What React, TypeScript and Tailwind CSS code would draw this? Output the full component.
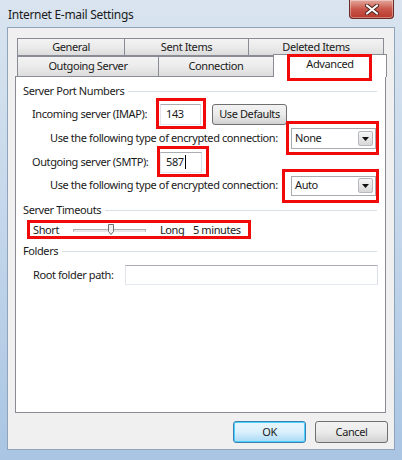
import React from "react";

function Mark({ className }: { className: string }) {
  return (
    <div
      className={`pointer-events-none absolute z-20 border-[3px] border-[#f00a0a] ${className}`}
    />
  );
}

function GroupHeader({ title }: { title: string }) {
  return (
    <div className="flex h-[16px] items-center pl-[7px] pr-[8px]">
      <span>{title}</span>
      <div className="ml-[4px] h-px flex-1 bg-[#d5dfe5]" />
    </div>
  );
}

function Combo({ value, tall }: { value: string; tall?: boolean }) {
  return (
    <div
      className={`flex w-[85px] items-center border border-[#a7abb0] bg-white pl-[3px] pr-[2px] ${
        tall ? "h-[21px]" : "h-[20px]"
      }`}
    >
      <span>{value}</span>
      <div className="ml-auto flex h-[15px] w-[15px] items-center justify-center rounded-[2px] border border-[#b5b9be] bg-gradient-to-b from-[#f6f6f6] to-[#d8d8d8]">
        <svg width="7" height="4" viewBox="0 0 7 4">
          <path d="M0 0h7L3.5 4z" fill="#111" />
        </svg>
      </div>
    </div>
  );
}

function Tab({
  label,
  className,
}: {
  label: string;
  className: string;
}) {
  return (
    <div
      className={`flex items-center justify-center border border-[#898c95] bg-gradient-to-b from-[#f3f3f3] via-[#ebebeb] to-[#dcdcdc] ${className}`}
    >
      {label}
    </div>
  );
}

export default function App() {
  return (
    <div className="relative h-[460px] w-[402px] overflow-hidden whitespace-nowrap bg-gradient-to-b from-[#d9e4ef] via-[#c3d6ea] to-[#a9c5e3] font-['Noto_Sans',sans-serif] text-[11px] tracking-[-0.4px] text-[#1a1a1a]">
      {/* title bar */}
      <div className="flex h-[27px] items-start justify-between pl-[8px] pr-[8px]">
        <span className="mt-[6px] text-[12px] tracking-[-0.3px] text-[#1b1b1b]">
          Internet E-mail Settings
        </span>
        <div className="flex h-[19px] w-[45px] items-center justify-center rounded-b-[4px] border border-t-0 border-[#6b2b25] bg-gradient-to-b from-[#e3a89e] via-[#c9574a] to-[#b8392c] shadow-[inset_0_0_0_1px_rgba(255,255,255,0.35)]">
          <svg width="14" height="11" viewBox="0 0 14 11">
            <path
              d="M2 1.5l10 8M12 1.5l-10 8"
              stroke="#4a2520"
              strokeWidth="4"
              strokeLinecap="round"
            />
            <path
              d="M2 1.5l10 8M12 1.5l-10 8"
              stroke="#fff"
              strokeWidth="2.2"
              strokeLinecap="round"
            />
          </svg>
        </div>
      </div>

      {/* client area */}
      <div className="mx-[7px] flex h-[423px] flex-col border border-[#8fa4bb] bg-[#f0f0f0] pl-[7px] pt-[10px]">
        {/* tab rows */}
        <div className="ml-[2px] flex h-[18px]">
          <Tab label="General" className="w-[108px]" />
          <Tab label="Sent Items" className="-ml-px w-[125px]" />
          <Tab label="Deleted Items" className="-ml-px w-[136px]" />
        </div>
        <div className="relative z-10 -mt-[2px] ml-[2px] flex h-[23px] items-start">
          <Tab label="Outgoing Server" className="mt-[2px] h-[21px] w-[142px]" />
          <Tab label="Connection" className="-ml-px mt-[2px] h-[21px] w-[116px]" />
          <div className="relative -ml-px flex h-[23px] w-[114px] items-start justify-center border border-b-0 border-[#898c95] bg-white pt-[1px]">
            Advanced
            <Mark className="-top-[1px] left-[13px] h-[27px] w-[85px]" />
          </div>
        </div>

        {/* page */}
        <div className="-mt-px flex h-[337px] w-[371px] flex-col border border-[#898c95] bg-white pt-[6px]">
          <GroupHeader title="Server Port Numbers" />

          <div className="mt-[4px] flex h-[22px] items-center pl-[16px]">
            <span className="w-[128px]">Incoming server (IMAP):</span>
            <div className="relative">
              <div className="flex h-[21px] w-[41px] items-center border border-[#abadb3] border-b-[#e3e9ef] border-l-[#e2e3ea] border-r-[#dbdfe6] pl-[5px]">
                143
              </div>
              <Mark className="-bottom-[4px] -left-[4px] -right-[5px] -top-[6px]" />
            </div>
            <div className="ml-[11px] flex h-[21px] w-[75px] items-center justify-center rounded-[3px] border border-[#707070] bg-gradient-to-b from-[#f2f2f2] via-[#ebebeb] to-[#d2d2d2]">
              Use Defaults
            </div>
          </div>

          <div className="mt-[3px] flex h-[21px] items-center pl-[34px]">
            <span className="w-[241px]">
              Use the following type of encrypted connection:
            </span>
            <div className="relative">
              <Combo value="None" tall />
              <Mark className="-bottom-[6px] -left-[5px] -right-[3px] -top-[7px]" />
            </div>
          </div>

          <div className="mt-[2px] flex h-[22px] items-center pl-[16px]">
            <span className="w-[128px]">Outgoing server (SMTP):</span>
            <div className="relative">
              <div className="flex h-[21px] w-[42px] items-center border border-[#abadb3] border-b-[#e3e9ef] border-l-[#e2e3ea] border-r-[#dbdfe6] pl-[5px]">
                587
                <span className="ml-px h-[14px] w-px bg-black" />
              </div>
              <Mark className="-bottom-[4px] -left-[3px] -right-[7px] -top-[6px]" />
            </div>
          </div>

          <div className="mt-[2px] flex h-[21px] items-center pl-[34px]">
            <span className="w-[241px]">
              Use the following type of encrypted connection:
            </span>
            <div className="relative">
              <Combo value="Auto" />
              <Mark className="-bottom-[7px] -left-[9px] -right-[3px] -top-[7px]" />
            </div>
          </div>

          <div className="mt-[6px]">
            <GroupHeader title="Server Timeouts" />
          </div>

          <div className="mt-[2px] flex h-[20px] items-center pl-[17px]">
            <div className="relative flex items-center">
              <span className="w-[40px]">Short</span>
              <div className="relative h-[12px] w-[73px]">
                <div className="absolute left-0 right-0 top-[5px] h-[3px] border border-[#b0b0b0] border-b-[#e7e7e7] bg-[#e7eaea]" />
                <svg
                  className="absolute left-[35px] top-0"
                  width="6"
                  height="11"
                  viewBox="0 0 6 11"
                >
                  <path
                    d="M0.5 0.5h5v7L3 10.5 0.5 7.5z"
                    fill="#f0f0f0"
                    stroke="#707070"
                  />
                </svg>
              </div>
              <span className="ml-[14px] w-[33px]">Long</span>
              <span>5 minutes</span>
              <Mark className="-bottom-[1px] -left-[6px] -right-[10px] -top-[2px]" />
            </div>
          </div>

          <div className="mt-[3px]">
            <GroupHeader title="Folders" />
          </div>

          <div className="mt-[6px] flex h-[20px] items-center pl-[17px]">
            <span className="w-[92px]">Root folder path:</span>
            <div className="h-[20px] w-[253px] border border-[#abadb3] border-b-[#e3e9ef] border-l-[#e2e3ea] border-r-[#dbdfe6]" />
          </div>
        </div>

        {/* dialog buttons */}
        <div className="mt-[8px] flex justify-end gap-[9px] pr-[6px]">
          <div className="flex h-[22px] w-[73px] items-center justify-center rounded-[3px] border border-[#3c7fb1] bg-gradient-to-b from-[#eaf6fd] via-[#d9f0fc] to-[#a7d9f5] shadow-[inset_0_0_0_1px_#48d2fc]">
            OK
          </div>
          <div className="flex h-[22px] w-[73px] items-center justify-center rounded-[3px] border border-[#707070] bg-gradient-to-b from-[#f2f2f2] via-[#ebebeb] to-[#d2d2d2]">
            Cancel
          </div>
        </div>
      </div>
    </div>
  );
}
